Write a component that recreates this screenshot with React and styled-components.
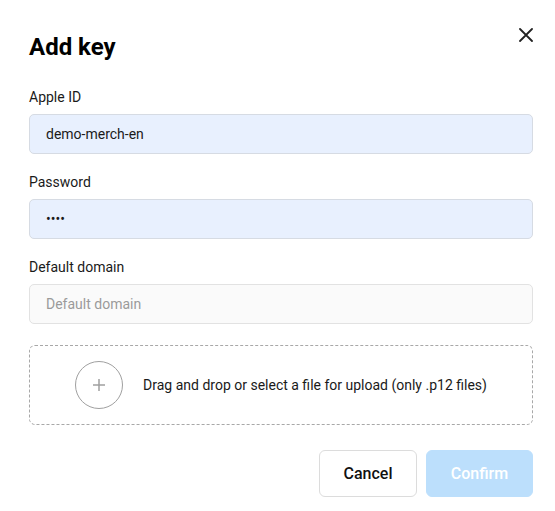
import React from 'react';
import styled, { createGlobalStyle } from 'styled-components';

const GlobalStyle = createGlobalStyle`
  body {
    margin: 0;
    background: #ffffff;
    font-family: Roboto, "Liberation Sans", sans-serif;
    color: #1a1a1a;
  }
`

const Dialog = styled.div`
  width: 555px;
  height: 511px;
  box-sizing: border-box;
  padding: 31px 22px 0 29px;
  background: #ffffff;
`

const Header = styled.div`
  display: flex;
  justify-content: space-between;
  align-items: flex-start;
  margin-bottom: 24px;
`

const Title = styled.h2`
  margin: 0;
  font-size: 24px;
  line-height: 32px;
  font-weight: 700;
  color: #000;
`

const CloseButton = styled.button`
  width: 20px;
  height: 20px;
  margin: -6px -3px 0 0;
  padding: 0;
  border: none;
  background: none;
  display: flex;
  align-items: center;
  justify-content: center;
  cursor: pointer;
`

const Field = styled.div`
  display: flex;
  flex-direction: column;
  gap: 7px;
  margin-bottom: 18px;
`

const Label = styled.label`
  font-size: 14px;
  line-height: 20px;
  color: #1a1a1a;
`

const Input = styled.input`
  box-sizing: border-box;
  height: 40px;
  width: 100%;
  padding: 0 16px;
  border-radius: 5px;
  border: 1px solid ${p => (p.$filled ? '#d6dbe3' : '#e2e2e2')};
  background: ${p => (p.$filled ? '#e8f0fe' : '#fafafa')};
  font-family: inherit;
  font-size: 14px;
  color: #1a1a1a;
  outline: none;

  &::placeholder {
    color: #9a9a9a;
  }
`

const DropZone = styled.div`
  box-sizing: border-box;
  height: 80px;
  margin-top: 21px;
  border: 1px dashed #a8a8a8;
  border-radius: 6px;
  display: flex;
  align-items: center;
  justify-content: center;
  gap: 20px;
`

const AddCircle = styled.div`
  box-sizing: border-box;
  width: 48px;
  height: 48px;
  border-radius: 50%;
  border: 1px solid #a0a0a0;
  display: flex;
  align-items: center;
  justify-content: center;
`

const DropText = styled.span`
  font-size: 14px;
  color: #1a1a1a;
`

const Actions = styled.div`
  display: flex;
  justify-content: flex-end;
  gap: 9px;
  margin-top: 25px;
`

const Button = styled.button`
  box-sizing: border-box;
  height: 47px;
  padding: 0;
  border-radius: 6px;
  font-family: inherit;
  font-size: 16px;
  font-weight: 500;
  cursor: pointer;
  border: 1px solid ${p => (p.$primary ? '#bcdffc' : '#dcdcdc')};
  background: ${p => (p.$primary ? '#bcdffc' : '#ffffff')};
  color: ${p => (p.$primary ? '#ffffff' : '#111111')};
  width: ${p => (p.$primary ? '107px' : '98px')};
`

const App = () => {
  return (
    <Dialog>
      <GlobalStyle />
      <Header>
        <Title>Add key</Title>
        <CloseButton aria-label="Close">
          <svg width="14" height="14" viewBox="0 0 14 14">
            <path d="M1 1L13 13M13 1L1 13" stroke="#222" strokeWidth="1.8" strokeLinecap="round" />
          </svg>
        </CloseButton>
      </Header>
      <Field>
        <Label>Apple ID</Label>
        <Input $filled defaultValue="demo-merch-en" />
      </Field>
      <Field>
        <Label>Password</Label>
        <Input $filled type="password" defaultValue="demo" />
      </Field>
      <Field>
        <Label>Default domain</Label>
        <Input placeholder="Default domain" />
      </Field>
      <DropZone>
        <AddCircle>
          <svg width="14" height="14" viewBox="0 0 14 14">
            <path d="M7 1V13M1 7H13" stroke="#a0a0a0" strokeWidth="1.5" />
          </svg>
        </AddCircle>
        <DropText>Drag and drop or select a file for upload (only .p12 files)</DropText>
      </DropZone>
      <Actions>
        <Button>Cancel</Button>
        <Button $primary>Confirm</Button>
      </Actions>
    </Dialog>
  );
};

export default App;
